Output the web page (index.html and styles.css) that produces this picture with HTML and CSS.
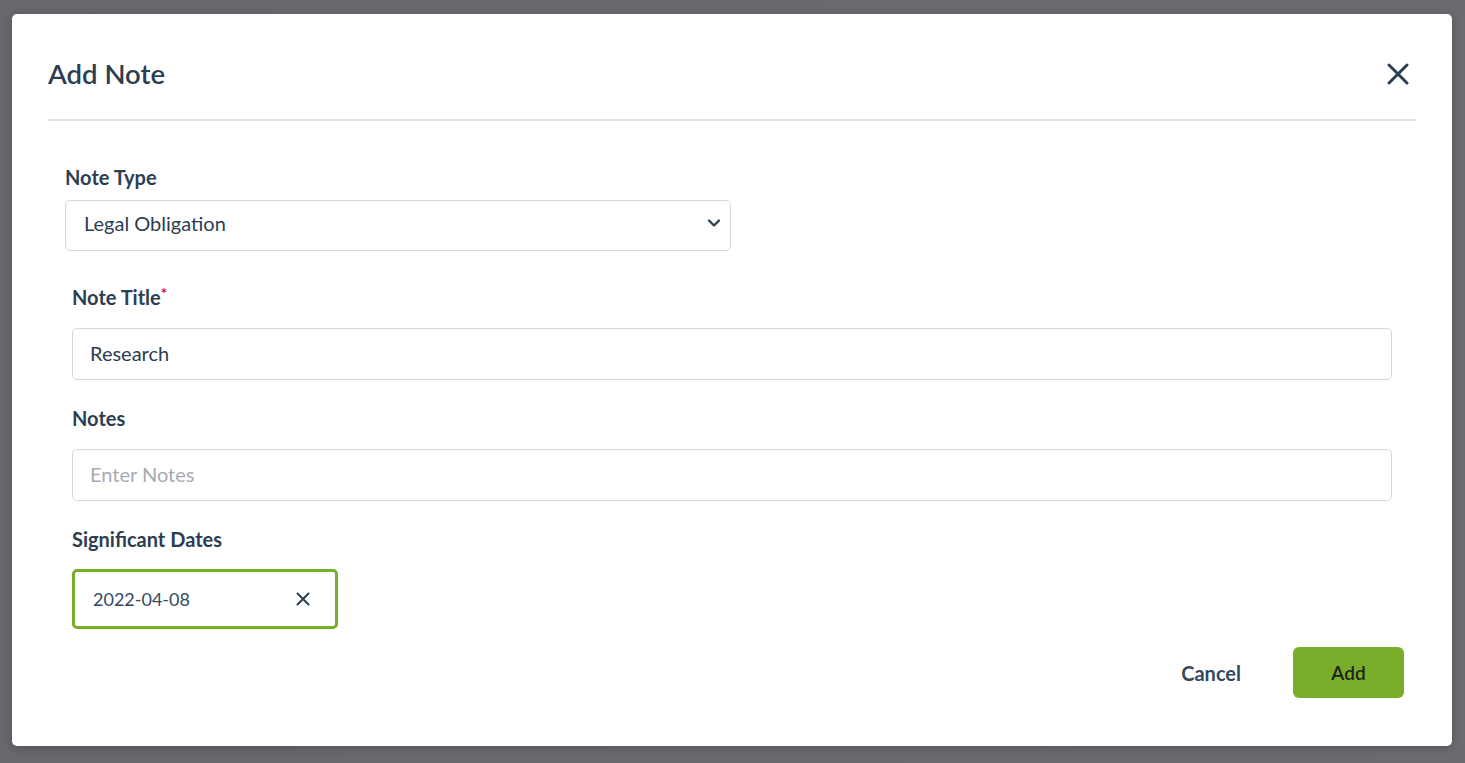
FILE: index.html
```html
<!DOCTYPE html>
<html lang="en">
<head>
<meta charset="utf-8">
<title>Add Note</title>
<link rel="stylesheet" href="styles.css">
</head>
<body>
<div class="backdrop">
  <div class="modal">
    <div class="modal-header">
      <h2 class="modal-title">Add Note</h2>
      <button class="close-btn" aria-label="Close">
        <svg width="22" height="22" viewBox="0 0 22 22"><path d="M2 2 L20 20 M20 2 L2 20" stroke="#2c3e50" stroke-width="3" stroke-linecap="round"/></svg>
      </button>
    </div>
    <div class="modal-body">
      <div class="type-group">
        <label class="field-label">Note Type</label>
        <div class="select">
          <span class="select-value">Legal Obligation</span>
          <svg class="chevron" width="14" height="10" viewBox="0 0 14 10"><path d="M2 2.5 L7 7.5 L12 2.5" fill="none" stroke="#2c3e50" stroke-width="2.4" stroke-linecap="round" stroke-linejoin="round"/></svg>
        </div>
      </div>
      <div class="fields">
        <div class="field">
          <label class="field-label">Note Title<span class="req">*</span></label>
          <div class="input"><span class="input-value">Research</span></div>
        </div>
        <div class="field">
          <label class="field-label">Notes</label>
          <div class="input"><span class="placeholder">Enter Notes</span></div>
        </div>
        <div class="field">
          <label class="field-label">Significant Dates</label>
          <div class="date-chip">
            <span class="date-value">2022-04-08</span>
            <svg class="chip-x" width="14" height="14" viewBox="0 0 14 14"><path d="M1.5 1.5 L12.5 12.5 M12.5 1.5 L1.5 12.5" stroke="#2c3e50" stroke-width="2" stroke-linecap="round"/></svg>
          </div>
        </div>
      </div>
      <div class="actions">
        <button class="btn-cancel">Cancel</button>
        <button class="btn-add">Add</button>
      </div>
    </div>
  </div>
</div>
</body>
</html>
```

FILE: styles.css
```css
* { box-sizing: border-box; }
html, body { margin: 0; padding: 0; }
body {
  font-family: Lato, "Open Sans", sans-serif;
  background: #68696d;
  width: 1465px;
  height: 763px;
  overflow: hidden;
}
.backdrop {
  height: 763px;
  padding: 14px 13px 17px 12px;
  background: linear-gradient(90deg, #67686c 0%, #6a6b6f 100%);
}
.modal {
  background: #fff;
  border-radius: 5px;
  height: 732px;
  padding: 0 36px;
  box-shadow: 0 2px 8px rgba(0,0,0,0.2);
}
.modal-header {
  display: flex;
  align-items: center;
  justify-content: space-between;
  height: 107px;
  border-bottom: 2px solid #e1e1e1;
  padding-top: 14px;
}
.modal-title {
  margin: 0;
  font-size: 27.5px;
  font-weight: 600;
  color: #2c3e50;
}
.close-btn {
  border: 0;
  background: none;
  padding: 0;
  margin-right: 7px;
  display: flex;
  cursor: pointer;
}
.modal-body {
  padding-top: 44px;
}
.type-group {
  padding-left: 17px;
  width: 683px;
}
.field-label {
  display: block;
  font-size: 20px;
  font-weight: 700;
  color: #2c3e50;
  line-height: 24px;
}
.req { color: #e01010; font-size: 15px; vertical-align: top; position: relative; top: -4px; }
.select {
  margin-top: 11px;
  height: 51px;
  border: 1px solid #d4d6d9;
  border-radius: 5px;
  display: flex;
  align-items: center;
  justify-content: space-between;
  padding: 0 9px 5px 18px;
}
.select-value, .input-value {
  font-size: 20px;
  color: #2c3e50;
}
.fields {
  padding: 0 24px;
  margin-top: 34px;
  display: flex;
  flex-direction: column;
  gap: 26px;
}
.field .input {
  margin-top: 19px;
  height: 52px;
  border: 1px solid #d4d6d9;
  border-radius: 5px;
  display: flex;
  align-items: center;
  padding: 0 17px 2px;
}
.placeholder { font-size: 20px; color: #a6abb2; }
.date-chip {
  margin-top: 18px;
  width: 266px;
  height: 60px;
  border: 3px solid #7aad2a;
  border-radius: 5px;
  display: flex;
  align-items: center;
  justify-content: space-between;
  padding: 0 25px 0 18px;
}
.date-value { font-size: 18px; color: #34495e; }
.actions {
  display: flex;
  justify-content: flex-end;
  align-items: center;
  gap: 52px;
  padding-right: 12px;
  margin-top: 18px;
}
.btn-cancel {
  border: 0;
  background: none;
  font-family: inherit;
  font-size: 20px;
  font-weight: 700;
  color: #34495e;
  padding: 0;
}
.btn-add {
  border: 0;
  background: #7aad29;
  border-radius: 6px;
  width: 111px;
  height: 51px;
  font-family: inherit;
  font-size: 19px;
  font-weight: 600;
  color: #1c2418;
}
```
